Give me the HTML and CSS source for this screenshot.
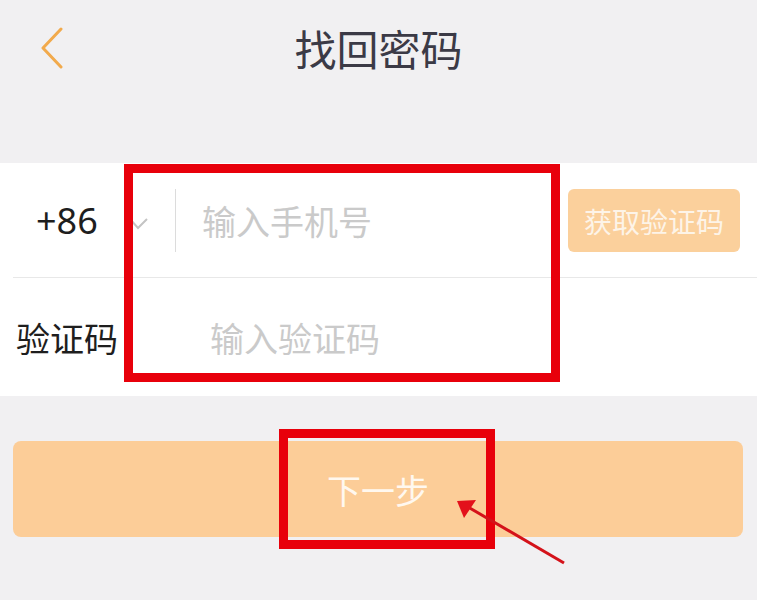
FILE: index.html
```html
<!DOCTYPE html>
<html lang="zh-CN">

<head>
    <meta charset="UTF-8">
    <meta name="viewport" content="width=device-width, initial-scale=1.0">
    <title>找回密码</title>
    <link rel="stylesheet" href="styles.css">
</head>

<body>

    <header class="topbar">
        <a class="back" href="#">
            <svg width="24" height="42" viewBox="0 0 24 42">
                <polyline points="21,2 3,21 21,40" fill="none" stroke="#f2aa4c" stroke-width="3" stroke-linecap="round" stroke-linejoin="round" />
            </svg>
        </a>
        <h1>找回密码</h1>
        <span></span>
    </header>

    <form class="panel">
        <div class="row row-phone">
            <span class="code">+86</span>
            <svg class="caret" width="22" height="14" viewBox="0 0 22 14">
                <polyline points="2,2 10,11 19,2" fill="none" stroke="#c4c4c4" stroke-width="2" />
            </svg>
            <span class="sep"></span>
            <input class="field" type="tel" placeholder="输入手机号">
            <button class="get-code" type="button">获取验证码</button>
        </div>
        <div class="row row-code">
            <span class="label">验证码</span>
            <input class="field" type="text" placeholder="输入验证码">
        </div>
    </form>

    <button class="next" type="button">下一步</button>

    <!-- annotation marks from the tutorial screenshot -->
    <div class="mark mark-fields"></div>
    <div class="mark mark-next"></div>
    <svg class="pointer" width="757" height="600" viewBox="0 0 757 600">
        <line x1="564" y1="563" x2="468" y2="507" stroke="#d4121a" stroke-width="3" />
        <polygon points="457,501 476,500 464,518" fill="#e3111b" />
    </svg>

</body>

</html>
```

FILE: styles.css
```css
body {
    font-family: "Noto Sans CJK SC", "Noto Sans", sans-serif;
    background-color: #f1f0f2;
    margin: 0;
    padding: 0;
    position: relative;
    height: 600px;
    overflow: hidden;
}

.topbar {
    display: grid;
    grid-template-columns: 1fr auto 1fr;
    align-items: center;
    height: 96px;
}

.back {
    display: flex;
    padding-left: 40px;
}

.topbar h1 {
    margin: 0;
    font-size: 42px;
    font-weight: 400;
    line-height: 1;
    color: #3b3a46;
    letter-spacing: 0;
}

.panel {
    margin: 67px 0 0;
    background-color: #fff;
}

.row {
    display: flex;
    align-items: center;
}

.row-phone {
    height: 115px;
    padding-left: 36px;
    padding-right: 17px;
    position: relative;
}

.row-phone::after {
    content: "";
    position: absolute;
    left: 13px;
    right: 0;
    bottom: 0;
    height: 1px;
    background-color: #e8e8e8;
}

.row-code {
    height: 117px;
    margin-top: 1px;
    padding-left: 16px;
}

.code {
    font-family: "Noto Sans", sans-serif;
    font-size: 36px;
    line-height: 1;
    color: #1e1e1e;
    width: 92px;
}

.caret {
    margin-top: 6px;
}

.sep {
    width: 1px;
    height: 63px;
    background-color: #dcdcdc;
    margin-left: 25px;
    margin-right: 26px;
}

.label {
    font-size: 34px;
    line-height: 1;
    color: #1e1e1e;
    width: 194px;
}

.field {
    flex: 1;
    min-width: 0;
    border: none;
    outline: none;
    padding: 0;
    font-family: inherit;
    font-size: 34px;
    color: #333;
    background: transparent;
}

.field::placeholder {
    color: #cacaca;
}

.get-code {
    width: 172px;
    height: 63px;
    border: none;
    border-radius: 6px;
    background-color: #fbd09c;
    color: #fdf4e8;
    font-family: inherit;
    font-size: 28px;
    padding: 0;
}

.next {
    display: block;
    width: 730px;
    height: 96px;
    margin: 45px 13px 0;
    border: none;
    border-radius: 8px;
    background-color: #fccd98;
    color: #fff8ef;
    font-family: inherit;
    font-size: 34px;
    padding: 0;
}

.mark {
    position: absolute;
    border: 9px solid #e8000b;
    box-sizing: border-box;
}

.mark-fields {
    left: 124px;
    top: 164px;
    width: 436px;
    height: 218px;
}

.mark-next {
    left: 279px;
    top: 429px;
    width: 216px;
    height: 120px;
}

.pointer {
    position: absolute;
    left: 0;
    top: 0;
    pointer-events: none;
}
```
